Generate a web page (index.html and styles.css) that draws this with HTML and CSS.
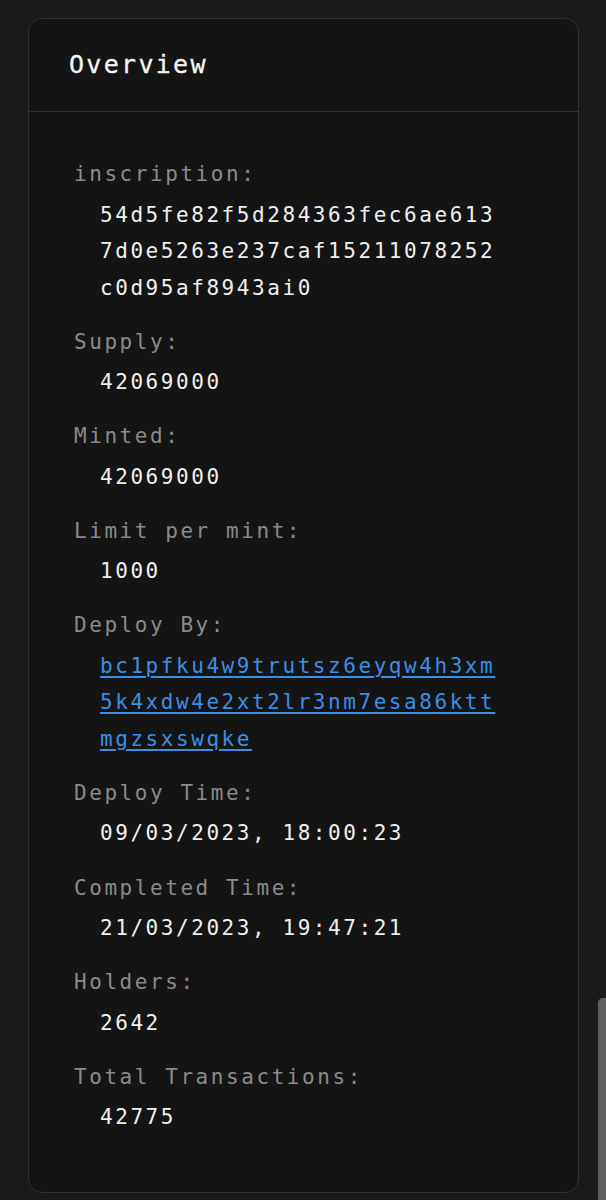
FILE: index.html
```html
<!DOCTYPE html>
<html lang="en">
<head>
<meta charset="utf-8">
<title>Overview</title>
<link rel="stylesheet" href="styles.css">
</head>
<body>
<section class="card">
  <header class="card-head">
    <h2 class="title">Overview</h2>
  </header>
  <div class="card-body">
    <div class="item">
      <div class="label">inscription:</div>
      <div class="value">54d5fe82f5d284363fec6ae6137d0e5263e237caf15211078252c0d95af8943ai0</div>
    </div>
    <div class="item">
      <div class="label">Supply:</div>
      <div class="value">42069000</div>
    </div>
    <div class="item">
      <div class="label">Minted:</div>
      <div class="value">42069000</div>
    </div>
    <div class="item">
      <div class="label">Limit per mint:</div>
      <div class="value">1000</div>
    </div>
    <div class="item">
      <div class="label">Deploy By:</div>
      <div class="value"><a class="link" href="#">bc1pfku4w9trutsz6eyqw4h3xm5k4xdw4e2xt2lr3nm7esa86kttmgzsxswqke</a></div>
    </div>
    <div class="item">
      <div class="label">Deploy Time:</div>
      <div class="value">09/03/2023, 18:00:23</div>
    </div>
    <div class="item">
      <div class="label">Completed Time:</div>
      <div class="value">21/03/2023, 19:47:21</div>
    </div>
    <div class="item">
      <div class="label">Holders:</div>
      <div class="value">2642</div>
    </div>
    <div class="item">
      <div class="label">Total Transactions:</div>
      <div class="value">42775</div>
    </div>
  </div>
</section>
<div class="scroll-thumb"></div>
</body>
</html>
```
FILE: styles.css
```css
html, body {
  margin: 0;
  padding: 0;
  background: #1b1a19;
}

body {
  font-family: "DejaVu Sans Mono", "Liberation Mono", monospace;
  color: #ededed;
  padding-top: 18px;
  padding-bottom: 8px;
  min-height: 1200px;
  box-sizing: border-box;
}

.card {
  margin-left: 28px;
  width: 551px;
  box-sizing: border-box;
  background: #141414;
  border: 1px solid #313131;
  border-radius: 14px;
}

.card-head {
  height: 93px;
  display: flex;
  align-items: center;
  padding-left: 40px;
  border-bottom: 1px solid #313131;
  box-sizing: border-box;
}

.title {
  margin: 0;
  font-size: 25px;
  font-weight: normal;
  letter-spacing: 2.3px;
  color: #f4f4f4;
  line-height: 30px;
  -webkit-text-stroke: 0.3px #f4f4f4;
}

.card-body {
  padding: 44px 20px 39px 45px;
}

.item {
  margin-bottom: 17.6px;
}

.label {
  font-size: 21px;
  line-height: 36.5px;
  letter-spacing: 2.56px;
  color: #8a8a8a;
}

.value {
  margin-top: 4px;
  margin-left: 26px;
  width: 400px;
  font-size: 21px;
  line-height: 36.5px;
  letter-spacing: 2.56px;
  color: #efefef;
  word-break: break-all;
}

.link {
  color: #3a8ee3;
  text-decoration: underline;
  text-underline-offset: 3px;
  text-decoration-thickness: 1.5px;
}

.scroll-thumb {
  position: absolute;
  left: 598px;
  top: 998px;
  width: 8px;
  height: 202px;
  background: #5e5e5e;
  border-radius: 5px 0 0 0;
}
```
